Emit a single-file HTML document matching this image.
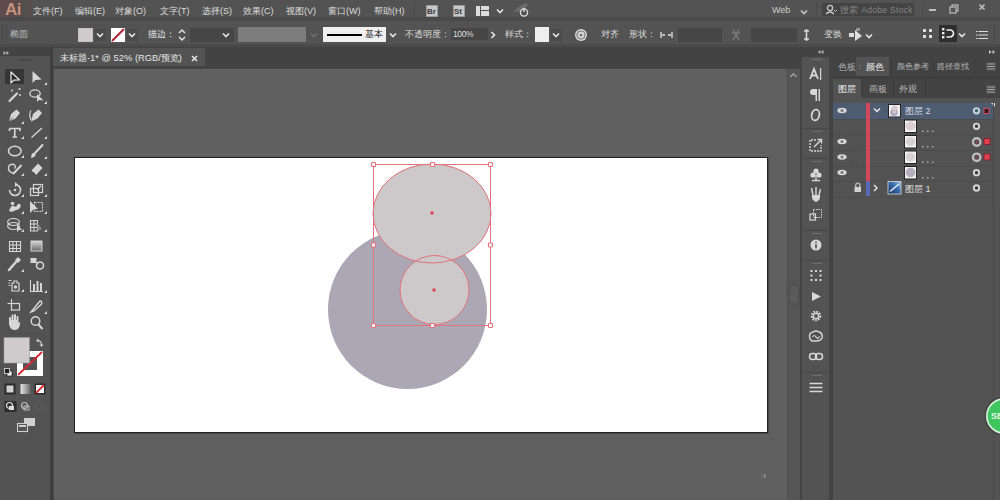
<!DOCTYPE html>
<html><head><meta charset="utf-8">
<style>
*{margin:0;padding:0;box-sizing:border-box}
html,body{width:1000px;height:500px;overflow:hidden;background:#535353;font-family:"Liberation Sans",sans-serif;color:#d8d8d8}
.a{position:absolute}
.t{position:absolute;white-space:nowrap;font-size:9px;line-height:10px;color:#dcdcdc}
</style></head><body>
<!-- menu bar -->
<div class="a" style="left:0;top:0;width:1000px;height:17px;background:#535353"></div>
<div class="a" style="left:0;top:17px;width:1000px;height:4px;background:#4a4a4a"></div>

<!-- logo -->
<div class="a" style="left:0;top:0;width:32px;height:17px;background:linear-gradient(90deg,#5c4b50 0%,#614a48 30%,#574a4a 60%,#535050 85%,#5a4c4e 100%)"></div>
<div class="t" style="left:5px;top:1px;font-size:17px;line-height:17px;color:#c4927e;font-weight:bold;letter-spacing:-0.5px">Ai</div>
<div class="t" style="left:33px;top:6px">文件(F)</div>
<div class="t" style="left:75px;top:6px">编辑(E)</div>
<div class="t" style="left:115px;top:6px">对象(O)</div>
<div class="t" style="left:160px;top:6px">文字(T)</div>
<div class="t" style="left:202px;top:6px">选择(S)</div>
<div class="t" style="left:243px;top:6px">效果(C)</div>
<div class="t" style="left:286px;top:6px">视图(V)</div>
<div class="t" style="left:328px;top:6px">窗口(W)</div>
<div class="t" style="left:374px;top:6px">帮助(H)</div>

<div class="a" style="left:414px;top:3px;width:1px;height:12px;background:#484848"></div>
<div class="a" style="left:426px;top:5px;width:12px;height:12px;background:#c8c8c8;border:1px solid #9a9a9a"></div>
<div class="t" style="left:427px;top:7px;font-size:8px;color:#3a3a3a;font-weight:bold">Br</div>
<div class="a" style="left:453px;top:5px;width:12px;height:12px;background:#c8c8c8;border:1px solid #9a9a9a"></div>
<div class="t" style="left:454px;top:7px;font-size:8px;color:#3a3a3a;font-weight:bold">St</div>
<svg class="a" style="left:476px;top:6px" width="13" height="10" viewBox="0 0 13 10"><rect x="0" y="0" width="4" height="10" fill="#ddd"/><rect x="5" y="0" width="8" height="4" fill="#ddd"/><rect x="5" y="5" width="8" height="5" fill="#ddd"/></svg>
<svg class="a" style="left:496px;top:8px" width="8" height="6" viewBox="0 0 8 6"><path d="M1 1.5 L4 4.5 L7 1.5" fill="none" stroke="#e6e6e6" stroke-width="1.6"/></svg>
<svg class="a" style="left:512px;top:2px" width="18" height="15" viewBox="0 0 18 15"><path d="M1 10 L8 4 L14 1 L16 3 L9 9 Z" fill="#6e6e6e"/><circle cx="12" cy="10.5" r="3.6" fill="#535353" stroke="#e0e0e0" stroke-width="1.3"/><path d="M12 6 V10" stroke="#e0e0e0" stroke-width="1.3"/></svg>
<div class="t" style="left:772px;top:5px;color:#d0d0d0">Web</div>
<svg class="a" style="left:800px;top:9px" width="8" height="6" viewBox="0 0 8 6"><path d="M1 1.5 L4 4.5 L7 1.5" fill="none" stroke="#c8c8c8" stroke-width="1.6"/></svg>
<div class="a" style="left:816px;top:2px;width:1px;height:13px;background:#484848"></div>
<div class="a" style="left:822px;top:3px;width:92px;height:13px;background:#444;border-radius:2px"></div>
<svg class="a" style="left:825px;top:4px" width="12" height="11" viewBox="0 0 12 11"><circle cx="5" cy="4" r="2.6" fill="none" stroke="#c8c8c8" stroke-width="1.3"/><path d="M1 10 Q5 6 9 10" stroke="#c8c8c8" stroke-width="1.3" fill="none"/><path d="M9 6 L10.5 7.5 L12 6" stroke="#c8c8c8" fill="none"/></svg>
<div class="t" style="left:840px;top:5px;font-size:8.5px;color:#858585;letter-spacing:0.3px">搜索 Adobe Stock</div>
<div class="a" style="left:922px;top:2px;width:1px;height:14px;background:#4c4c4c"></div>
<div class="a" style="left:929px;top:9px;width:7px;height:2px;background:#bdbdbd"></div>
<svg class="a" style="left:949px;top:4px" width="10" height="10" viewBox="0 0 10 10"><rect x="3" y="1" width="6" height="6" fill="none" stroke="#bdbdbd" stroke-width="1.2"/><rect x="1" y="3" width="6" height="6" fill="#535353" stroke="#bdbdbd" stroke-width="1.2"/></svg>
<div class="a" style="left:959px;top:2px;width:1px;height:14px;background:#4c4c4c"></div>
<svg class="a" style="left:978px;top:3px" width="8" height="8" viewBox="0 0 8 8"><path d="M1.5 1.5 L6.5 6.5 M6.5 1.5 L1.5 6.5" stroke="#c0c0c0" stroke-width="1.5"/></svg>
<!-- control bar -->
<div class="a" style="left:0;top:21px;width:1000px;height:23px;background:#535353"></div>
<div class="a" style="left:0;top:44px;width:1000px;height:3px;background:#4b4b4b"></div><div class="a" style="left:0;top:47px;width:1000px;height:10px;background:#434343"></div>

<div class="a" style="left:2px;top:24px;width:1px;height:18px;background:#484848"></div>
<div class="a" style="left:6px;top:24px;width:1px;height:18px;background:#484848"></div>
<div class="t" style="left:10px;top:29px;color:#b8b8b8">椭圆</div>
<div class="a" style="left:78px;top:28px;width:15px;height:14px;background:#d0cccd;border:1px solid #c4c0c1"></div>
<div class="a" style="left:95px;top:29px;width:11px;height:12px;background:#4b4b4b"></div>
<svg class="a" style="left:96px;top:32px" width="8" height="6" viewBox="0 0 8 6"><path d="M1 1.5 L4 4.5 L7 1.5" fill="none" stroke="#e6e6e6" stroke-width="1.6"/></svg>
<div class="a" style="left:111px;top:28px;width:14px;height:14px;background:#fff"></div>
<svg class="a" style="left:111px;top:28px" width="14" height="14"><line x1="1" y1="13" x2="13" y2="1" stroke="#b32935" stroke-width="2.2"/></svg>
<div class="a" style="left:127px;top:29px;width:11px;height:12px;background:#4b4b4b"></div>
<svg class="a" style="left:128px;top:32px" width="8" height="6" viewBox="0 0 8 6"><path d="M1 1.5 L4 4.5 L7 1.5" fill="none" stroke="#e6e6e6" stroke-width="1.6"/></svg>
<div class="t" style="left:148px;top:29px;color:#ececec">描边：</div>
<svg class="a" style="left:177px;top:28px" width="10" height="14" viewBox="0 0 10 14"><path d="M2 5 L5 2 L8 5 M2 9 L5 12 L8 9" fill="none" stroke="#e0e0e0" stroke-width="1.5"/></svg>
<div class="a" style="left:190px;top:28px;width:44px;height:14px;background:#464646"></div>
<svg class="a" style="left:222px;top:32px" width="8" height="6" viewBox="0 0 8 6"><path d="M1 1.5 L4 4.5 L7 1.5" fill="none" stroke="#e6e6e6" stroke-width="1.6"/></svg>
<div class="a" style="left:238px;top:27px;width:68px;height:15px;background:#7c7c7c"></div>
<svg class="a" style="left:310px;top:32px" width="8" height="6" viewBox="0 0 8 6"><path d="M1 1.5 L4 4.5 L7 1.5" fill="none" stroke="#707070" stroke-width="1.6"/></svg>
<div class="a" style="left:323px;top:27px;width:63px;height:15px;background:#f0f0f0"></div>
<div class="a" style="left:327px;top:34px;width:35px;height:2px;background:#000"></div>
<div class="t" style="left:365px;top:29px;color:#222">基本</div>
<svg class="a" style="left:389px;top:32px" width="8" height="6" viewBox="0 0 8 6"><path d="M1 1.5 L4 4.5 L7 1.5" fill="none" stroke="#e6e6e6" stroke-width="1.6"/></svg>
<div class="t" style="left:405px;top:29px">不透明度：</div>
<div class="a" style="left:451px;top:28px;width:37px;height:12px;background:#464646"></div>
<div class="t" style="left:453px;top:29px;font-size:8.5px;letter-spacing:-0.4px">100%</div>
<svg class="a" style="left:490px;top:31px" width="6" height="8" viewBox="0 0 6 8"><path d="M1.5 1 L4.5 4 L1.5 7" fill="none" stroke="#e6e6e6" stroke-width="1.6"/></svg>
<div class="t" style="left:505px;top:29px">样式：</div>
<div class="a" style="left:535px;top:27px;width:14px;height:15px;background:#eeeeee"></div>
<div class="a" style="left:551px;top:29px;width:11px;height:12px;background:#4b4b4b"></div>
<svg class="a" style="left:552px;top:32px" width="8" height="6" viewBox="0 0 8 6"><path d="M1 1.5 L4 4.5 L7 1.5" fill="none" stroke="#e6e6e6" stroke-width="1.6"/></svg>
<svg class="a" style="left:574px;top:28px" width="14" height="14" viewBox="0 0 14 14"><circle cx="7" cy="7" r="6" fill="#d9d9d9"/><circle cx="7" cy="7" r="4" fill="none" stroke="#777" stroke-width="1.2"/><circle cx="7" cy="7" r="1.5" fill="#777"/></svg>
<div class="t" style="left:601px;top:29px">对齐</div>
<div class="t" style="left:629px;top:29px">形状：</div>
<svg class="a" style="left:660px;top:31px" width="13" height="8" viewBox="0 0 13 8"><path d="M1 1 V7 M12 1 V7 M2 4 H5 M8 4 H11" stroke="#e0e0e0" stroke-width="1.3" fill="none"/></svg>
<div class="a" style="left:678px;top:28px;width:44px;height:14px;background:#464646"></div>
<svg class="a" style="left:729px;top:28px" width="14" height="14" viewBox="0 0 14 14"><path d="M4 2 L10 12 M10 2 L4 12 M3 5 H11" stroke="#777" stroke-width="1.6" fill="none"/></svg>
<div class="a" style="left:751px;top:28px;width:46px;height:14px;background:#464646"></div>
<svg class="a" style="left:802px;top:27px" width="9" height="16" viewBox="0 0 9 16"><path d="M4.5 2 V14 M2 4 H7 M2 12 H7" stroke="#dcdcdc" stroke-width="1.5" fill="none"/></svg>
<div class="t" style="left:824px;top:29px">变换</div>
<svg class="a" style="left:848px;top:27px" width="16" height="16" viewBox="0 0 16 16"><path d="M1 6 H6 V10 H1 Z" fill="#ddd"/><path d="M7 3 V14 L14 9 Z" fill="#ddd"/><path d="M9 1 V4 M11 1 V4" stroke="#ddd" stroke-width="1"/></svg>
<svg class="a" style="left:865px;top:33px" width="8" height="6" viewBox="0 0 8 6"><path d="M1 1.5 L4 4.5 L7 1.5" fill="none" stroke="#e6e6e6" stroke-width="1.6"/></svg>
<svg class="a" style="left:922px;top:28px" width="12" height="11" viewBox="0 0 12 11"><rect x="1" y="1" width="3" height="3" fill="#ddd"/><rect x="7" y="1" width="3" height="3" fill="#ddd"/><rect x="1" y="7" width="3" height="3" fill="#ddd"/><rect x="7" y="7" width="3" height="3" fill="#ddd"/></svg>
<div class="a" style="left:939px;top:25px;width:18px;height:17px;background:#2f2f2f"></div>
<svg class="a" style="left:939px;top:25px" width="18" height="17" viewBox="0 0 18 17"><rect x="3" y="3" width="2.4" height="2.4" fill="#eee"/><rect x="3" y="7" width="2.4" height="2.4" fill="#eee"/><rect x="3" y="11" width="2.4" height="2.4" fill="#eee"/><path d="M7.5 5 H11 A3.5 3.5 0 0 1 11 12 H7.5" stroke="#eee" stroke-width="1.7" fill="none"/></svg>
<svg class="a" style="left:958px;top:32px" width="8" height="6" viewBox="0 0 8 6"><path d="M1 1.5 L4 4.5 L7 1.5" fill="none" stroke="#e6e6e6" stroke-width="1.6"/></svg>
<svg class="a" style="left:975px;top:30px" width="14" height="10" viewBox="0 0 14 10"><path d="M1 1.5 H13 M1 5 H13 M1 8.5 H13" stroke="#ddd" stroke-width="1.2"/><path d="M3 0 V10" stroke="#535353" stroke-width="1"/></svg>
<div class="a" style="left:994px;top:24px;width:1px;height:19px;background:#484848"></div>
<!-- tab bar -->
<div class="a" style="left:52px;top:47px;width:748px;height:22px;background:#434343"></div>
<div class="a" style="left:53px;top:48px;width:152px;height:18px;background:#535353"></div><div class="a" style="left:54px;top:69px;width:731px;height:1px;background:#656565"></div>

<div class="t" style="left:60px;top:53px;color:#e6e6e6;font-size:9.35px">未标题-1* @ 52% (RGB/预览)</div>
<svg class="a" style="left:191px;top:55px" width="7" height="7" viewBox="0 0 7 7"><path d="M1 1 L6 6 M6 1 L1 6" stroke="#e6e6e6" stroke-width="1.5"/></svg>
<!-- canvas -->
<div class="a" style="left:50px;top:47px;width:3px;height:453px;background:linear-gradient(90deg,#444,#3b3b3b 50%,#444)"></div><div class="a" style="left:53px;top:69px;width:1px;height:431px;background:#4a4a4a"></div><div class="a" style="left:54px;top:69px;width:1px;height:431px;background:#676767"></div>
<div class="a" style="left:54px;top:70px;width:731px;height:430px;background:#5f5f5f"></div>
<div class="a" style="left:785px;top:69px;width:15px;height:431px;background:#555555;border-left:1px solid #646464"></div><div class="a" style="left:800px;top:47px;width:2px;height:453px;background:#3e3e3e"></div>
<!-- artboard -->
<div class="a" style="left:74px;top:154px;width:694px;height:1px;background:#686868"></div><div class="a" style="left:74px;top:436px;width:694px;height:1px;background:#666"></div><div class="a" style="left:74px;top:157px;width:694px;height:276px;background:#fff;border:1px solid #222;box-shadow:0.5px 0.5px 0 #333"></div>

<svg class="a" style="left:0;top:0" width="1000" height="500" viewBox="0 0 1000 500">
<circle cx="407.5" cy="309.5" r="79.5" fill="#aca7b4"/>
<ellipse cx="432" cy="213.5" rx="59" ry="49.5" fill="#cdc8ca"/>
<circle cx="434.5" cy="290" r="34.5" fill="#cdc8ca"/>
<g fill="none" stroke="#e0737b" stroke-width="1">
<ellipse cx="432" cy="213.5" rx="59" ry="49.5"/>
<circle cx="434.5" cy="290" r="34.5"/>
<rect x="373.5" y="164.5" width="117" height="161"/>
</g>
<g fill="#fff" stroke="#e2767e" stroke-width="1.2"><rect x="371.5" y="162.5" width="4" height="4" rx="0.8"/><rect x="430.5" y="162.5" width="4" height="4" rx="0.8"/><rect x="488.5" y="162.5" width="4" height="4" rx="0.8"/><rect x="371.5" y="243" width="4" height="4" rx="0.8"/><rect x="488.5" y="243" width="4" height="4" rx="0.8"/><rect x="371.5" y="323.5" width="4" height="4" rx="0.8"/><rect x="430.5" y="323.5" width="4" height="4" rx="0.8"/><rect x="488.5" y="323.5" width="4" height="4" rx="0.8"/></g>
<circle cx="432" cy="213" r="1.8" fill="#e04a55"/>
<circle cx="434" cy="290" r="1.8" fill="#e04a55"/>
</svg>
<!-- left toolbar -->
<div class="a" style="left:0;top:48px;width:50px;height:452px;background:#535353"></div>
<div class="a" style="left:0;top:48px;width:50px;height:8px;background:#434343"></div>

<svg class="a" style="left:0;top:0" width="50" height="500" viewBox="0 0 50 500">
<path d="M3.5 51 L6 53 L3.5 55 Z M6.5 51 L9 53 L6.5 55 Z" fill="#bbb"/>
<rect x="18" y="59" width="14" height="2" fill="#474747"/>
<rect x="5" y="69" width="19" height="15" fill="#363636"/>
<path d="M11 72 L11 83 L13.8 80.2 L19.5 80 Z" fill="#2a2a2a" stroke="#e8e8e8" stroke-width="1.2" stroke-linejoin="round"/>
<path d="M32.5 71 L32.5 83 L35.5 80 L41.5 79.5 Z" fill="#d6d6d6"/>
<path d="M44 85 L47 85 L47 82 Z" fill="#d6d6d6"/>
<!-- wand -->
<path d="M9.5 101 L17 93.5" stroke="#d6d6d6" stroke-width="2.2" stroke-linecap="round"/>
<circle cx="12" cy="90.5" r="1" fill="#d6d6d6"/><circle cx="19.5" cy="89" r="1.1" fill="#d6d6d6"/><circle cx="20" cy="95" r="1" fill="#d6d6d6"/>
<!-- lasso -->
<ellipse cx="35" cy="93.5" rx="5.2" ry="3.6" fill="none" stroke="#d6d6d6" stroke-width="1.4"/>
<path d="M37 94 L37 102 L39 100 L43.5 100.5 Z" fill="#d6d6d6"/>
<path d="M44 104 L47 104 L47 101 Z" fill="#d6d6d6"/>
<!-- pen -->
<path d="M9 121.5 L11 114 L16.5 109.5 L20 113 L15.5 118.5 Z" fill="#d6d6d6"/>
<path d="M9 121.5 L13 117.5" stroke="#535353" stroke-width="0.9"/>
<path d="M21 124 L24 124 L24 121 Z" fill="#d6d6d6"/>
<!-- curvature pen -->
<path d="M31 121.5 L33 114 L38.5 109.5 L42 113 L37.5 118.5 Z" fill="#d6d6d6"/>
<path d="M31 120 Q28.5 114 31 110.5" stroke="#d6d6d6" stroke-width="1.2" fill="none"/>
<!-- type -->
<path d="M9.5 128.5 H20 V131 M9.5 128.5 V131 M14.75 128.5 V137 M12.5 137 H17" stroke="#d6d6d6" stroke-width="1.7" fill="none"/>
<path d="M21 139 L24 139 L24 136 Z" fill="#d6d6d6"/>
<!-- line -->
<path d="M31.5 137.5 L42 128" stroke="#d6d6d6" stroke-width="1.3"/>
<path d="M44 139 L47 139 L47 136 Z" fill="#d6d6d6"/>
<!-- ellipse -->
<ellipse cx="14.8" cy="151" rx="6.3" ry="4.8" fill="none" stroke="#d6d6d6" stroke-width="1.5"/>
<path d="M21 158 L24 158 L24 155 Z" fill="#d6d6d6"/>
<!-- brush -->
<path d="M32 157 L35.5 152.5 L42.5 145" stroke="#d6d6d6" stroke-width="2" stroke-linecap="round"/>
<circle cx="33.5" cy="155" r="2" fill="#d6d6d6"/>
<path d="M44 159 L47 159 L47 156 Z" fill="#d6d6d6"/>
<!-- shaper -->
<path d="M13 173 Q8 172 8.5 167 Q10 163.5 14 164.5 Q16.5 166 14.5 168.5" stroke="#d6d6d6" stroke-width="1.3" fill="none"/>
<path d="M13 174 L21.5 165" stroke="#d6d6d6" stroke-width="2"/>
<path d="M21 176 L24 176 L24 173 Z" fill="#d6d6d6"/>
<!-- eraser -->
<path d="M31.5 170.5 L38 163.5 L42.5 168 L36 175 Z" fill="#d6d6d6"/>
<path d="M33 172 L35.5 174.5" stroke="#535353" stroke-width="1"/>
<path d="M44 176 L47 176 L47 173 Z" fill="#d6d6d6"/>
<rect x="5" y="180" width="40" height="1" fill="#4f4f4f"/>
<!-- rotate -->
<path d="M9.5 190 A5.5 5.5 0 1 0 15 184.5" stroke="#d6d6d6" stroke-width="1.6" fill="none"/>
<path d="M15 182 L18 184.5 L15 187 Z" fill="#d6d6d6"/>
<circle cx="15" cy="190" r="1.3" fill="#d6d6d6"/>
<path d="M21 197 L24 197 L24 194 Z" fill="#d6d6d6"/>
<!-- scale -->
<rect x="30.5" y="188.5" width="8" height="7" fill="none" stroke="#d6d6d6" stroke-width="1.2"/>
<rect x="33.5" y="184.5" width="9" height="8" fill="none" stroke="#d6d6d6" stroke-width="1.2"/>
<path d="M37 190 L41 186" stroke="#d6d6d6" stroke-width="1.2"/>
<path d="M44 197 L47 197 L47 194 Z" fill="#d6d6d6"/>
<!-- warp -->
<path d="M9 211 Q11 205 14 206 Q16 208 18 204 Q21 203 20.5 207 Q19 210 16 210 Q12 213 9 211 Z" fill="#d6d6d6"/>
<circle cx="12.5" cy="203.5" r="1.8" fill="#d6d6d6"/>
<path d="M21 214 L24 214 L24 211 Z" fill="#d6d6d6"/>
<!-- free transform -->
<path d="M30 201 L30 213 L33.5 209.5 L38 209 Z" fill="#d6d6d6"/>
<rect x="34.5" y="202.5" width="8" height="9" fill="none" stroke="#d6d6d6" stroke-width="1.1" stroke-dasharray="2 1"/>
<path d="M44 214 L47 214 L47 211 Z" fill="#d6d6d6"/>
<!-- shape builder -->
<ellipse cx="13.5" cy="222" rx="5.8" ry="3.5" fill="none" stroke="#d6d6d6" stroke-width="1.2"/>
<ellipse cx="13.5" cy="226" rx="5.8" ry="3.5" fill="none" stroke="#d6d6d6" stroke-width="1.2"/>
<path d="M17 224 L17 232 L19 230 L22 230 Z" fill="#d6d6d6"/>
<path d="M21 232 L24 232 L24 229 Z" fill="#d6d6d6"/>
<!-- perspective -->
<path d="M30.5 220.5 H37.5 V231 H30.5 Z M30.5 224 H37.5 M30.5 227.5 H37.5 M34 220.5 V231" stroke="#d6d6d6" stroke-width="1.1" fill="none"/>
<path d="M37.5 223 L42 229 L37.5 231 Z" fill="#888"/>
<path d="M44 232 L47 232 L47 229 Z" fill="#d6d6d6"/>
<rect x="5" y="235" width="40" height="1" fill="#4f4f4f"/>
<!-- mesh -->
<path d="M9.5 241.5 H20.5 V251.5 H9.5 Z M9.5 245 H20.5 M9.5 248.5 H20.5 M13 241.5 V251.5 M16.5 241.5 V251.5" stroke="#d6d6d6" stroke-width="1.1" fill="none"/>
<!-- gradient -->
<defs><linearGradient id="gr" x1="0" x2="0" y1="0" y2="1"><stop offset="0" stop-color="#d8d8d8"/><stop offset="1" stop-color="#6a6a6a"/></linearGradient></defs>
<rect x="31" y="241" width="11" height="10" fill="url(#gr)" stroke="#d6d6d6" stroke-width="1"/>
<!-- eyedropper -->
<path d="M9 270 L16 262" stroke="#d6d6d6" stroke-width="2.4" stroke-linecap="round"/>
<path d="M15 260 L18 257 L21 260 L18 263 Z" fill="#d6d6d6"/>
<path d="M21 272 L24 272 L24 269 Z" fill="#d6d6d6"/>
<!-- blend -->
<rect x="30.5" y="258" width="6" height="5" fill="#d6d6d6"/>
<circle cx="40" cy="265.5" r="3.5" fill="none" stroke="#d6d6d6" stroke-width="1.6"/>
<path d="M35 262 L38 264" stroke="#d6d6d6" stroke-width="1.3"/>
<!-- symbol sprayer -->
<path d="M14 281 h3 v2 h2 v8 h-7 v-8 h2 Z" fill="none" stroke="#d6d6d6" stroke-width="1.2"/>
<circle cx="15.5" cy="287" r="1.7" fill="#d6d6d6"/>
<path d="M8.5 280.5 h3 M8.5 283 h1.5 M8.5 285.5 h2" stroke="#d6d6d6" stroke-width="1"/>
<path d="M21 292 L24 292 L24 289 Z" fill="#d6d6d6"/>
<!-- graph -->
<path d="M30.5 280 V291.5 H43" stroke="#d6d6d6" stroke-width="1.1" fill="none"/>
<rect x="33" y="284" width="2" height="7" fill="#d6d6d6"/><rect x="36.5" y="281" width="2" height="10" fill="#d6d6d6"/><rect x="40" y="283" width="2" height="8" fill="#d6d6d6"/>
<path d="M44 293 L47 293 L47 290 Z" fill="#d6d6d6"/>
<rect x="5" y="296" width="40" height="1" fill="#4f4f4f"/>
<!-- artboard -->
<path d="M11.5 299 V311" stroke="#d6d6d6" stroke-width="1.1"/>
<path d="M7.5 303.5 H20" stroke="#d6d6d6" stroke-width="1.1"/>
<rect x="11.5" y="303.5" width="8" height="6.5" fill="none" stroke="#d6d6d6" stroke-width="1.2"/>
<!-- slice -->
<path d="M31 312 L40 301 Q42.5 301 41.5 304 L34 311 Z" fill="none" stroke="#d6d6d6" stroke-width="1.4"/>
<path d="M44 314 L47 314 L47 311 Z" fill="#d6d6d6"/>
<!-- hand -->
<path d="M10 324 V318 M12.5 323 V315.5 M15 323 V315 M17.5 323.5 V317" stroke="#d6d6d6" stroke-width="2" stroke-linecap="round"/>
<path d="M9 322 Q9 329 14 330 Q19 330 19.5 326 L20.5 322 L18 323 L17.5 320 H9 Z" fill="#d6d6d6"/>
<!-- zoom -->
<circle cx="35.5" cy="321" r="4.3" fill="none" stroke="#d6d6d6" stroke-width="1.5"/>
<path d="M38.5 324.5 L42 328.5" stroke="#d6d6d6" stroke-width="2" stroke-linecap="round"/>
<rect x="5" y="333" width="40" height="1" fill="#4f4f4f"/>
<!-- fill / stroke -->
<rect x="17" y="351" width="26" height="25" fill="#fff"/>
<rect x="23" y="357" width="14" height="13" fill="#535353"/>
<path d="M18 375 L42 352" stroke="#d42a35" stroke-width="1.8"/>
<rect x="4" y="337.5" width="25.5" height="25.5" fill="#cfcbcc" stroke="#9a9a9a" stroke-width="0.6"/>
<path d="M37.5 340.5 Q41.5 340.5 41.5 345" stroke="#cfcfcf" stroke-width="1.2" fill="none"/>
<path d="M36 340.5 L38.5 338.5 V342.5 Z M39.5 344.5 H43.5 L41.5 347 Z" fill="#cfcfcf"/>
<rect x="7" y="371" width="5" height="5" fill="#fff" stroke="#222" stroke-width="0.8"/>
<rect x="4.5" y="368.5" width="5" height="5" fill="#222" stroke="#ddd" stroke-width="0.8"/>
<!-- color modes -->
<rect x="4.5" y="383.5" width="11" height="11" fill="#2a2a2a"/>
<rect x="6.5" y="385.5" width="7" height="7" fill="#d0d0d0"/>
<rect x="20.5" y="384" width="10" height="10" fill="url(#gr2)"/>
<defs><linearGradient id="gr2" x1="0" x2="1"><stop offset="0" stop-color="#e6e6e6"/><stop offset="1" stop-color="#6a6a6a"/></linearGradient></defs>
<rect x="34.5" y="383.5" width="11" height="11" fill="#2a2a2a"/>
<rect x="36" y="385" width="8" height="8" fill="#fff"/>
<path d="M36 393 L44 385" stroke="#d42a35" stroke-width="1.8"/>
<!-- draw modes -->
<rect x="4.5" y="401" width="12" height="11" fill="#2e2e2e"/>
<circle cx="9.5" cy="405.5" r="3" fill="none" stroke="#ddd" stroke-width="1.2"/><rect x="9" y="406" width="5" height="4" fill="#ddd"/>
<circle cx="24.5" cy="405.5" r="3" fill="none" stroke="#bdbdbd" stroke-width="1.2"/><rect x="24" y="406" width="5" height="4" fill="none" stroke="#bdbdbd" stroke-width="1"/>
<circle cx="39.5" cy="406.5" r="3.8" fill="none" stroke="#5e5e5e" stroke-width="1.2"/>
<!-- screen mode -->
<rect x="24.5" y="418.5" width="10" height="7" fill="#cfcfcf" stroke="#cfcfcf"/>
<rect x="17.5" y="423.5" width="10" height="8" fill="#535353" stroke="#cfcfcf" stroke-width="1.1"/>
<rect x="19" y="425" width="7" height="2" fill="#cfcfcf"/>
</svg>
<!-- right icon strip -->
<div class="a" style="left:800px;top:48px;width:33px;height:452px;background:#434343"></div>
<div class="a" style="left:802px;top:57px;width:27px;height:443px;background:#535353"></div>
<!-- right panel -->
<div class="a" style="left:833px;top:48px;width:167px;height:452px;background:#535353"></div>
<div class="a" style="left:833px;top:48px;width:167px;height:8px;background:#434343"></div>
<svg class="a" style="left:987px;top:48px" width="12" height="8" viewBox="0 0 12 8"><path d="M2 2 L4.5 4 L2 6 Z M5.5 2 L8 4 L5.5 6 Z" fill="#c8c8c8"/></svg>
<!-- tab row 1 -->
<div class="a" style="left:833px;top:56px;width:167px;height:20px;background:#434343"></div>
<div class="a" style="left:856px;top:57px;width:33px;height:19px;background:#535353"></div>
<div class="t" style="left:838px;top:62px;color:#b0b0b0;font-size:8.6px">色板</div>
<div class="t" style="left:859px;top:62px;color:#b0b0b0;font-size:8px">:</div>
<div class="t" style="left:866px;top:62px;color:#ededed;font-size:8.6px">颜色</div>
<div class="a" style="left:891px;top:59px;width:1px;height:15px;background:#3a3a3a"></div>
<div class="t" style="left:897px;top:62px;color:#b8b8b8;font-size:8.2px">颜色参考</div>
<div class="a" style="left:933px;top:59px;width:1px;height:15px;background:#3a3a3a"></div><div class="a" style="left:974px;top:59px;width:1px;height:15px;background:#3a3a3a"></div>
<div class="t" style="left:937px;top:62px;color:#b8b8b8;font-size:8.2px">路径查找</div>
<svg class="a" style="left:986px;top:62px" width="10" height="9" viewBox="0 0 10 9"><rect x="0" y="0" width="10" height="9" fill="#4c4c4c"/><path d="M1 2 H9 M1 4.5 H9 M1 7 H9" stroke="#a8a8a8" stroke-width="1.1"/></svg>
<div class="a" style="left:833px;top:76px;width:167px;height:3px;background:#3e3e3e"></div>
<!-- tab row 2 -->
<div class="a" style="left:833px;top:79px;width:167px;height:19px;background:#434343"></div>
<div class="a" style="left:833px;top:79px;width:28px;height:19px;background:#535353"></div>
<div class="t" style="left:838px;top:84px;color:#f0f0f0">图层</div>
<div class="a" style="left:862px;top:81px;width:1px;height:15px;background:#3a3a3a"></div>
<div class="t" style="left:869px;top:84px;color:#b8b8b8">画板</div>
<div class="a" style="left:893px;top:81px;width:1px;height:15px;background:#3a3a3a"></div>
<div class="t" style="left:899px;top:84px;color:#b8b8b8">外观</div>
<div class="a" style="left:925px;top:81px;width:1px;height:15px;background:#3a3a3a"></div>
<svg class="a" style="left:986px;top:85px" width="10" height="9" viewBox="0 0 10 9"><rect x="0" y="0" width="10" height="9" fill="#4c4c4c"/><path d="M1 2 H9 M1 4.5 H9 M1 7 H9" stroke="#a8a8a8" stroke-width="1.1"/></svg>
<!-- layers -->
<div class="a" style="left:993px;top:98px;width:1px;height:402px;background:#484848"></div>
<svg class="a" style="left:833px;top:98px" width="167" height="110" viewBox="833 98 167 110">
<rect x="833" y="103" width="161" height="16" fill="#4e5c72"/>
<path d="M991 103 H995 V107 Z" fill="#e8e8e8"/>
<rect x="833" y="119" width="161" height="1" fill="#4c4c4c"/>
<rect x="833" y="134.5" width="161" height="1" fill="#4c4c4c"/>
<rect x="833" y="150" width="161" height="1" fill="#4c4c4c"/>
<rect x="833" y="165.5" width="161" height="1" fill="#4c4c4c"/>
<rect x="833" y="181" width="161" height="1" fill="#4c4c4c"/>
<rect x="833" y="196.5" width="161" height="1" fill="#4c4c4c"/>
<rect x="851" y="119" width="1" height="78" fill="#505050"/><rect x="863" y="119" width="1" height="78" fill="#505050"/>
<rect x="993" y="98" width="1" height="110" fill="#474747"/>
<rect x="866" y="103" width="4" height="78" fill="#d2485a"/>
<rect x="866" y="181" width="4" height="15" fill="#5a68b8"/>
<ellipse cx="842" cy="110.5" rx="4.6" ry="2.8" fill="#d8d8d8"/><circle cx="842" cy="110.5" r="1.5" fill="#777"/>
<ellipse cx="842" cy="141.5" rx="4.6" ry="2.8" fill="#d8d8d8"/><circle cx="842" cy="141.5" r="1.5" fill="#777"/>
<ellipse cx="842" cy="157" rx="4.6" ry="2.8" fill="#d8d8d8"/><circle cx="842" cy="157" r="1.5" fill="#777"/>
<ellipse cx="842" cy="172.5" rx="4.6" ry="2.8" fill="#d8d8d8"/><circle cx="842" cy="172.5" r="1.5" fill="#777"/>
<path d="M874 108.5 L877 111.5 L880 108.5" stroke="#e6e6e6" stroke-width="1.5" fill="none"/>
<rect x="888.5" y="104.5" width="12" height="12.5" fill="#f2f2f2" stroke="#222" stroke-width="1"/><circle cx="894" cy="112.5" r="3.8" fill="#b0aabb"/><ellipse cx="894.5" cy="108.5" rx="2.9" ry="2.6" fill="#d4cfd2" stroke="#c89aa4" stroke-width="0.4"/><circle cx="894.6" cy="112" r="1.8" fill="#d4cfd2" stroke="#c89aa4" stroke-width="0.4"/>
<rect x="904.5" y="120.0" width="12" height="12.5" fill="#f2f2f2" stroke="#222" stroke-width="1"/><ellipse cx="910.5" cy="126" rx="4.4" ry="4" fill="#d8d2d5" stroke="#d8a8b0" stroke-width="0.5"/>
<rect x="904.5" y="135.5" width="12" height="12.5" fill="#f2f2f2" stroke="#222" stroke-width="1"/><ellipse cx="910.5" cy="141.5" rx="4.6" ry="4.6" fill="#d7d3d5"/>
<rect x="904.5" y="151.0" width="12" height="12.5" fill="#f2f2f2" stroke="#222" stroke-width="1"/><ellipse cx="910.5" cy="157" rx="4.6" ry="4.6" fill="#d7d3d5"/>
<rect x="904.5" y="166.5" width="12" height="12.5" fill="#f2f2f2" stroke="#222" stroke-width="1"/><ellipse cx="910.5" cy="172.5" rx="4.8" ry="4.8" fill="#b3aec0"/>
<g fill="#a8a8a8"><rect x="922" y="130.5" width="1.5" height="1.5"/><rect x="927" y="130.5" width="1.5" height="1.5"/><rect x="932" y="130.5" width="1.5" height="1.5"/></g>
<g fill="#a8a8a8"><rect x="922" y="146" width="1.5" height="1.5"/><rect x="927" y="146" width="1.5" height="1.5"/><rect x="932" y="146" width="1.5" height="1.5"/></g>
<g fill="#a8a8a8"><rect x="922" y="161.5" width="1.5" height="1.5"/><rect x="927" y="161.5" width="1.5" height="1.5"/><rect x="932" y="161.5" width="1.5" height="1.5"/></g>
<g fill="#a8a8a8"><rect x="922" y="177" width="1.5" height="1.5"/><rect x="927" y="177" width="1.5" height="1.5"/><rect x="932" y="177" width="1.5" height="1.5"/></g>
<circle cx="976.5" cy="110.8" r="2.7" fill="#3c6a5a" stroke="#c8d4e0" stroke-width="1.9"/>
<circle cx="976.5" cy="126.3" r="2.7" fill="#3a3a3a" stroke="#d4d4d4" stroke-width="1.9"/>
<circle cx="976.7" cy="142" r="3.7" fill="#444" stroke="#bdbdbd" stroke-width="2.4"/><circle cx="976.7" cy="142" r="1.5" fill="#8a4a55"/>
<circle cx="976.7" cy="157.3" r="3.7" fill="#444" stroke="#bdbdbd" stroke-width="2.4"/><circle cx="976.7" cy="157.3" r="1.5" fill="#8a4a55"/>
<circle cx="976.5" cy="172.7" r="2.7" fill="#3a3a3a" stroke="#d4d4d4" stroke-width="1.9"/>
<circle cx="976.5" cy="188" r="2.7" fill="#3a3a3a" stroke="#d4d4d4" stroke-width="1.9"/>
<rect x="984" y="108.5" width="5" height="5" fill="#3a1a22" stroke="#d44a5a" stroke-width="1"/>
<rect x="984" y="138.5" width="6" height="6" fill="#e04050" stroke="#801a2a" stroke-width="0.8"/>
<rect x="984" y="154" width="6" height="6" fill="#e04050" stroke="#801a2a" stroke-width="0.8"/>
<rect x="854.5" y="187" width="6.5" height="5" fill="#cfcfcf"/><path d="M855.8 187 V185 A2 2 0 0 1 859.8 185 V187" stroke="#cfcfcf" stroke-width="1.2" fill="none"/>
<path d="M874 185 L877 188 L874 191" stroke="#e0e0e0" stroke-width="1.5" fill="none"/>
<defs><linearGradient id="l1" x1="0" y1="1" x2="1" y2="0"><stop offset="0" stop-color="#15305a"/><stop offset="0.6" stop-color="#3a70b0"/><stop offset="1" stop-color="#a8c8e8"/></linearGradient></defs>
<rect x="888" y="181.5" width="13" height="12.5" fill="url(#l1)" stroke="#ddd" stroke-width="0.8"/><path d="M890 191.5 L899 184" stroke="#e6eef8" stroke-width="1.4"/>
</svg>
<div class="t" style="left:905px;top:106px;color:#d8dee8">图层 2</div>
<div class="t" style="left:905px;top:184px;color:#e0e0e0">图层 1</div>
<div class="a" style="left:833px;top:98px;width:160px;height:5px;background:#535353"></div>

<svg class="a" style="left:785px;top:48px" width="48" height="452" viewBox="785 48 48 452">
<path d="M818 50 L820.5 52 L818 54 Z M821 50 L823.5 52 L821 54 Z" fill="#bbb" transform="rotate(180 820.75 52)"/>
<rect x="812" y="59" width="10" height="1" fill="#707070"/>
<!-- A| -->
<path d="M810 79 L814 69 L818 79 M811.5 75.5 H816.5" stroke="#d8d8d8" stroke-width="1.8" fill="none"/>
<rect x="820" y="68" width="1.2" height="12" fill="#d8d8d8"/>
<!-- pilcrow -->
<path d="M816 89 H813 A3 3 0 0 0 813 95 H816" fill="#d8d8d8"/>
<rect x="815.5" y="89" width="1.5" height="12" fill="#d8d8d8"/><rect x="818.5" y="89" width="1.5" height="12" fill="#d8d8d8"/>
<!-- O italic -->
<ellipse cx="815.5" cy="115" rx="3.8" ry="5.5" fill="none" stroke="#d8d8d8" stroke-width="1.8" transform="rotate(12 815.5 115)"/>
<rect x="803" y="128" width="26" height="1" fill="#474747"/>
<rect x="812" y="131" width="10" height="1" fill="#707070"/>
<!-- export -->
<path d="M816 140 H810 V151 H821 V145" stroke="#d8d8d8" stroke-width="1.3" fill="none" stroke-dasharray="2 1"/>
<path d="M814 147 L821 140 M817.5 139.5 H821.5 V143.5" stroke="#d8d8d8" stroke-width="1.4" fill="none"/>
<rect x="803" y="158" width="26" height="1" fill="#474747"/>
<rect x="812" y="161" width="10" height="1" fill="#707070"/>
<!-- club -->
<circle cx="816" cy="171" r="2.6" fill="#d8d8d8"/><circle cx="813" cy="175" r="2.6" fill="#d8d8d8"/><circle cx="819" cy="175" r="2.6" fill="#d8d8d8"/>
<path d="M816 175 V180 M812 180.5 H820" stroke="#d8d8d8" stroke-width="1.3"/>
<!-- brush hand -->
<path d="M812 195 Q811 200 816 202 Q821 200 820 195 Z" fill="#d8d8d8"/>
<path d="M813 195 L811.5 188 M816 195 V187 M819 195 L820.5 189" stroke="#d8d8d8" stroke-width="1.4"/>
<!-- artboards -->
<rect x="813.5" y="209.5" width="8" height="8" fill="none" stroke="#d8d8d8" stroke-width="1" stroke-dasharray="1.5 1"/>
<rect x="810" y="214" width="5.5" height="6" fill="none" stroke="#d8d8d8" stroke-width="1.2"/>
<rect x="803" y="230" width="26" height="1" fill="#474747"/>
<rect x="812" y="233" width="10" height="1" fill="#707070"/>
<!-- info -->
<circle cx="816" cy="245" r="5.5" fill="#d8d8d8"/>
<rect x="815.2" y="241.5" width="1.6" height="1.5" fill="#535353"/><rect x="815.2" y="244" width="1.6" height="4.5" fill="#535353"/>
<rect x="803" y="260" width="26" height="1" fill="#474747"/>
<rect x="812" y="263" width="10" height="1" fill="#707070"/>
<!-- dotted square -->
<g fill="#d8d8d8"><rect x="810.5" y="270" width="2" height="2"/><rect x="815" y="270" width="2" height="2"/><rect x="819.5" y="270" width="2" height="2"/>
<rect x="810.5" y="274.5" width="2" height="2"/><rect x="819.5" y="274.5" width="2" height="2"/>
<rect x="810.5" y="279" width="2" height="2"/><rect x="815" y="279" width="2" height="2"/><rect x="819.5" y="279" width="2" height="2"/></g>
<!-- play -->
<path d="M812 292 L821 296.5 L812 301 Z" fill="#d8d8d8"/>
<!-- gear -->
<circle cx="816" cy="316" r="4.2" fill="none" stroke="#d8d8d8" stroke-width="2.2" stroke-dasharray="1.6 1.2"/>
<circle cx="816" cy="316" r="2.6" fill="none" stroke="#d8d8d8" stroke-width="1.2"/>
<!-- cc -->
<path d="M810 339 Q808 333 813 332 Q816 330 819 332 Q823 333 822 338 Q821 341 816 341 H812 Z" fill="none" stroke="#d8d8d8" stroke-width="1.4"/>
<path d="M812.5 337 Q814 334 816 337 Q818 340 819.5 336.5" fill="none" stroke="#d8d8d8" stroke-width="1.2"/>
<!-- link -->
<rect x="809.5" y="353.5" width="7" height="6" rx="3" fill="none" stroke="#d8d8d8" stroke-width="1.5"/>
<rect x="815.5" y="353.5" width="7" height="6" rx="3" fill="none" stroke="#d8d8d8" stroke-width="1.5"/>
<rect x="803" y="372" width="26" height="1" fill="#474747"/>
<rect x="812" y="375" width="10" height="1" fill="#707070"/>
<!-- lines -->
<path d="M809.5 383.5 H822.5 M809.5 387.5 H822.5 M809.5 391.5 H822.5" stroke="#d8d8d8" stroke-width="1.4"/>
<!-- scroll up chevron -->
<path d="M790.5 77 L793.5 73.8 L796.5 77" stroke="#a0a0a0" stroke-width="1.5" fill="none"/>
<rect x="789" y="285" width="10" height="19" rx="2" fill="#5a5a5a" stroke="#4b4b4b"/>
</svg>


<svg class="a" style="left:980px;top:392px" width="20" height="48" viewBox="980 392 20 48">
<circle cx="1004" cy="416" r="19.5" fill="#2a3a2e" opacity="0.5"/>
<circle cx="1004" cy="416" r="18" fill="#d8f0dc"/>
<circle cx="1004" cy="416" r="16.3" fill="#3fc55e"/>
</svg>
<div class="t" style="left:991px;top:411px;font-size:9px;font-weight:bold;color:#e8f8ea">SB</div>
<svg class="a" style="left:760px;top:472px" width="8" height="8" viewBox="0 0 8 8"><path d="M1 1 L4 4 L1 7" stroke="#777" stroke-width="1" fill="none"/><path d="M5 2 V6" stroke="#999" stroke-width="1.2"/></svg>
</body></html>
